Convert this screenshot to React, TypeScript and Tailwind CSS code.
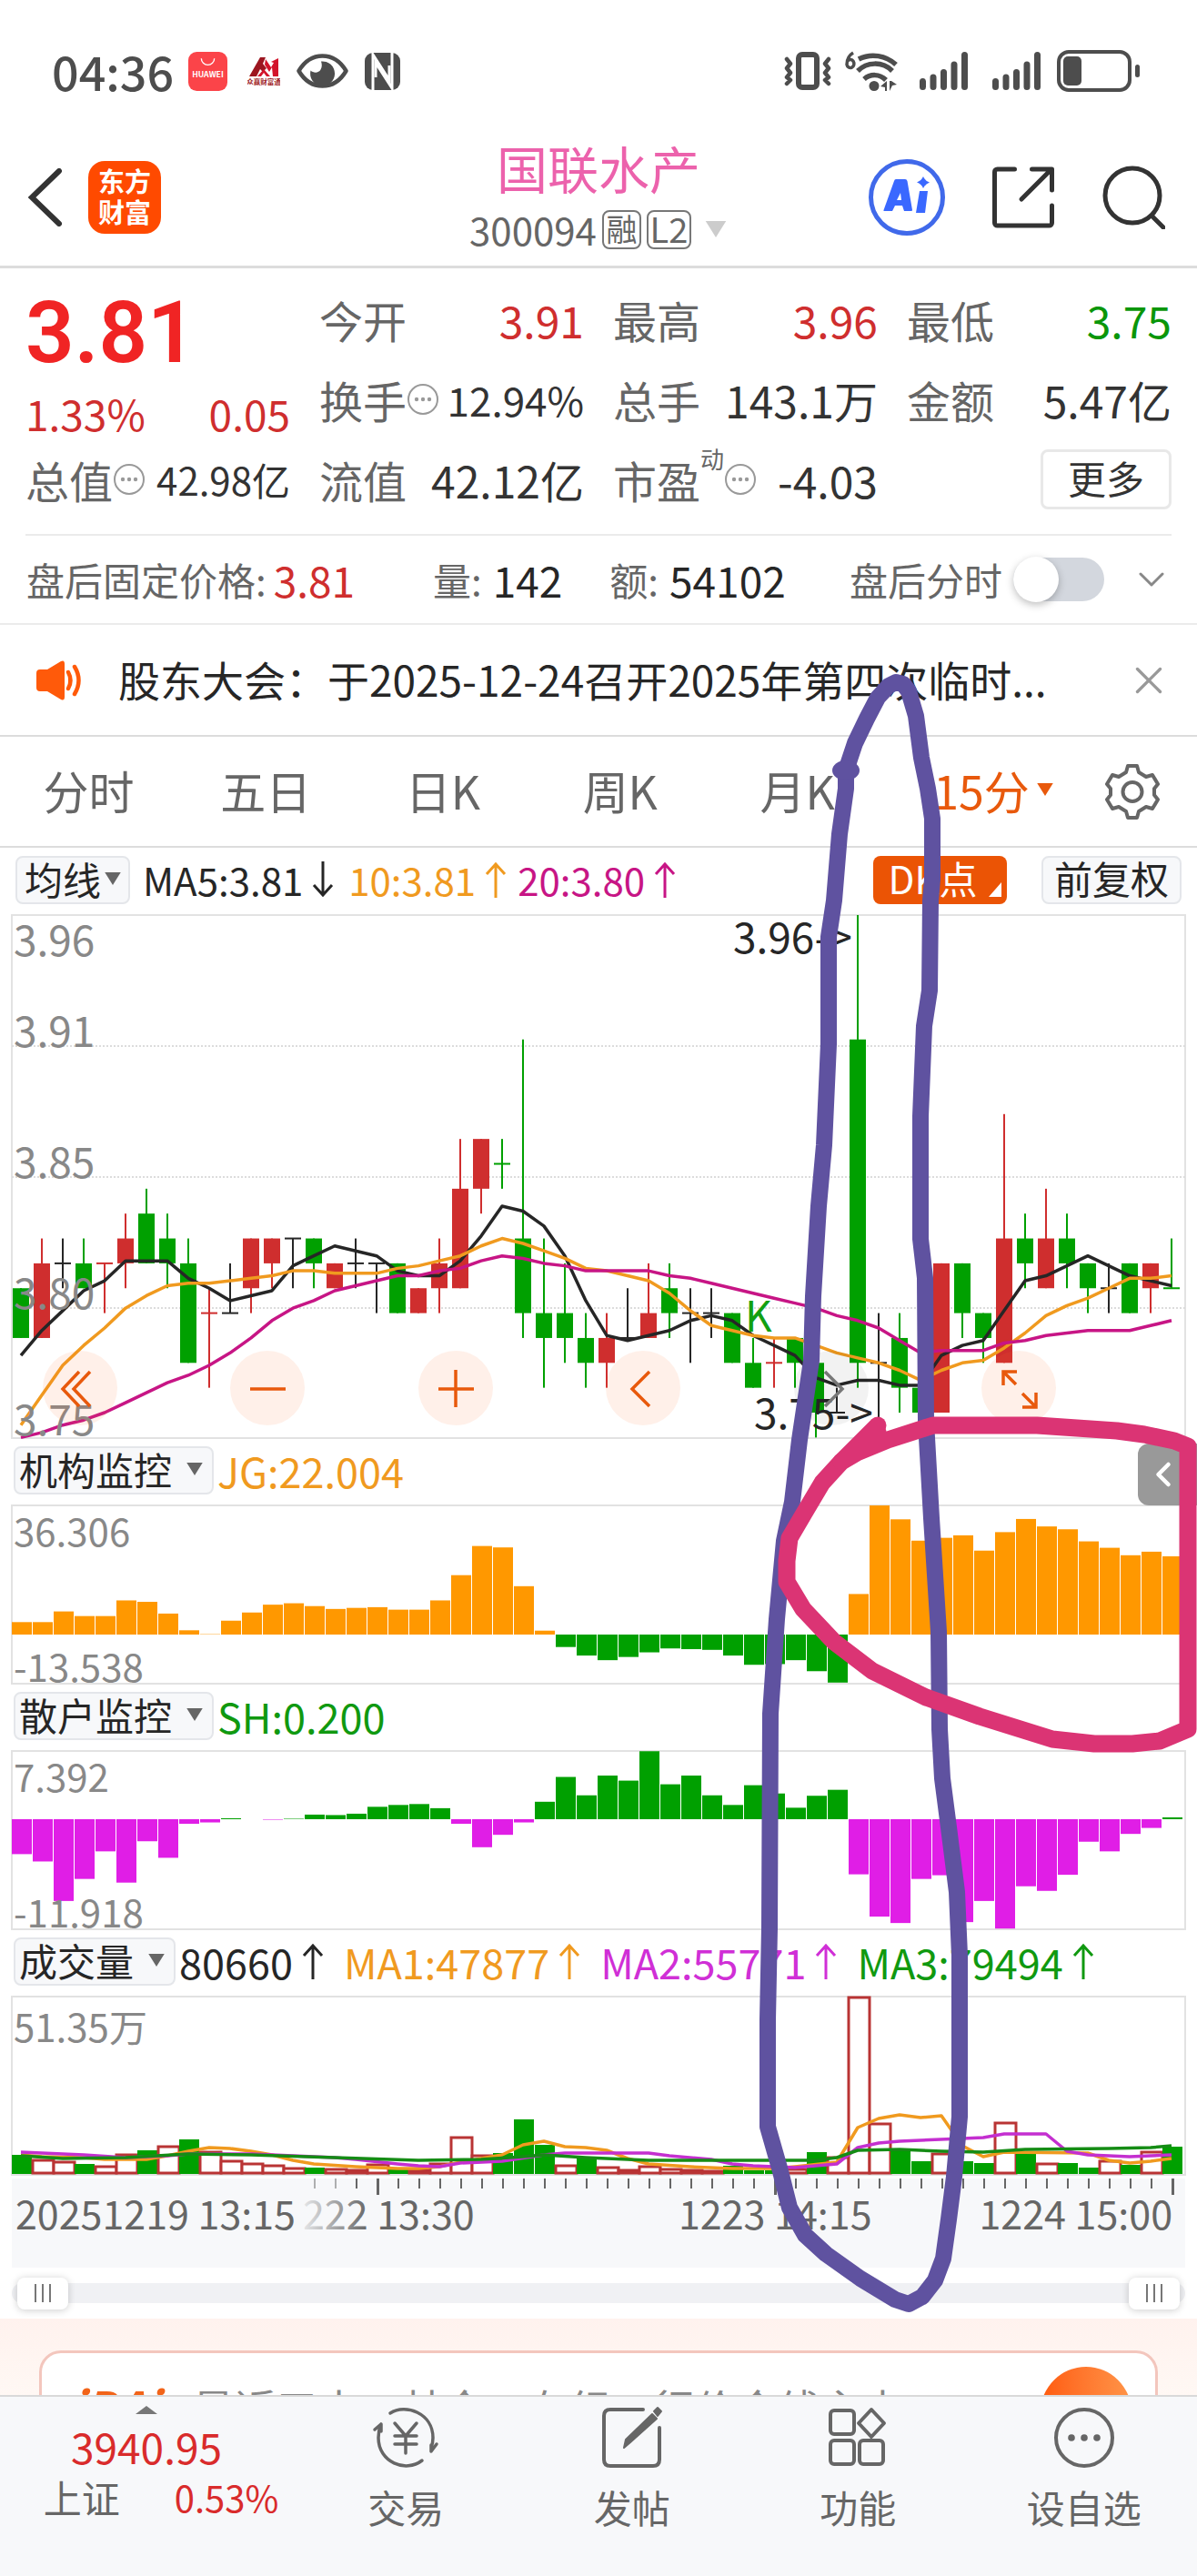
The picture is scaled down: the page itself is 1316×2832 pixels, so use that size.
import { useState, type ReactNode } from "react";
import * as Slider from "@radix-ui/react-slider";
import { ChevronDown, ChevronLeft, X } from "lucide-react";

const RED = "#cf2e2e";
const GREEN = "#00a000";
const INK = "#262626";
const ORANGE = "#f09a1f";
const MAGENTA = "#c71585";
const SLOT = 23;

// colour, high, low, body top, body bottom: all counted in cents below 3.96
type Candle = ["r" | "g" | "k", number, number, number, number];

const CANDLES: Candle[] = [
  ["g", 15, 17, 15, 17], ["r", 13, 17, 14, 17], ["k", 13, 15, 14, 14], ["g", 13, 15, 14, 15],
  ["r", 14, 16, 14, 14], ["r", 12, 15, 13, 14], ["g", 11, 14, 12, 14], ["g", 12, 15, 13, 14],
  ["g", 13, 18, 14, 18], ["r", 15, 19, 16, 16], ["k", 14, 16, 16, 16], ["r", 13, 16, 13, 15],
  ["r", 13, 15, 13, 14], ["k", 13, 15, 13, 13], ["g", 13, 15, 13, 14], ["r", 14, 15, 14, 15],
  ["k", 13, 15, 14, 14], ["k", 14, 16, 14, 14], ["g", 14, 16, 14, 16], ["r", 15, 16, 15, 16],
  ["r", 13, 16, 14, 15], ["r", 9, 15, 11, 15], ["r", 9, 12, 9, 11], ["g", 9, 11, 10, 10],
  ["g", 5, 17, 13, 16], ["g", 13, 19, 16, 17], ["g", 14, 18, 16, 17], ["g", 16, 19, 17, 18],
  ["r", 16, 19, 17, 18], ["k", 15, 17, 17, 17], ["r", 14, 17, 16, 17], ["g", 14, 17, 15, 16],
  ["k", 15, 18, 16, 16], ["k", 15, 17, 16, 16], ["g", 16, 18, 16, 18], ["g", 17, 19, 18, 19],
  ["r", 17, 19, 18, 18], ["g", 17, 19, 17, 18], ["g", 18, 21, 18, 20], ["k", 19, 20, 20, 20],
  ["g", 0, 19, 5, 18], ["k", 16, 21, 18, 18], ["g", 16, 20, 17, 19], ["g", 19, 20, 19, 20],
  ["r", 14, 20, 14, 20], ["g", 14, 17, 14, 16], ["g", 16, 18, 16, 17], ["r", 8, 18, 13, 18],
  ["g", 12, 15, 13, 14], ["r", 11, 15, 13, 15], ["g", 12, 15, 13, 14], ["g", 14, 16, 14, 15],
  ["k", 14, 16, 15, 15], ["g", 14, 16, 14, 16], ["r", 14, 16, 14, 15], ["g", 13, 15, 15, 15],
];

const MA5 = [
  17.7, 16.7, 15.9, 15.1, 14.7, 13.9, 13.9, 13.9, 14.6, 15, 15.5, 15.3, 15.1, 14.1, 13.7, 13.3, 13.5, 13.7, 14.3,
  14.5, 14.5, 13.9, 12.9, 11.7, 11.9, 12.5, 13.7, 15.5, 16.9, 17.1, 16.9, 16.7, 16.3, 16.1, 16.3, 16.9, 17.3, 17.7,
  18.6, 18.9, 18.7, 18.7, 18.9, 18.9, 17.7, 17.3, 17.1, 15.9, 14.7, 14.5, 14.1, 13.7, 14.1, 14.5, 14.7, 14.9,
];
const MA10 = [
  20.5, 19.3, 18.1, 17.3, 16.6, 15.8, 15.3, 14.9, 14.8, 14.8, 14.7, 14.6, 14.5, 14.3, 14.3, 14.4, 14.4, 14.4, 14.2,
  14.1, 13.9, 13.7, 13.3, 13, 13.2, 13.5, 13.8, 14.2, 14.3, 14.5, 14.7, 15.2, 15.9, 16.5, 16.7, 16.9, 17, 17, 17.3,
  17.6, 17.8, 18, 18.3, 18.7, 18.3, 18, 17.9, 17.4, 16.8, 16.1, 15.7, 15.4, 15, 14.6, 14.6, 14.5,
];
const MA20 = [
  21, 20.8, 20.5, 20.3, 20, 19.6, 19.2, 18.8, 18.5, 18.1, 17.6, 17, 16.3, 15.8, 15.5, 15.1, 14.9, 14.7, 14.5, 14.5,
  14.3, 14.2, 13.9, 13.7, 13.8, 14, 14.1, 14.3, 14.3, 14.3, 14.3, 14.5, 14.6, 14.8, 15, 15.2, 15.4, 15.6, 15.8, 16.1,
  16.3, 16.6, 17.1, 17.6, 17.5, 17.5, 17.5, 17.2, 17.1, 16.9, 16.8, 16.7, 16.7, 16.7, 16.5, 16.3,
];

const JG = [
  3.5, 3.5, 6.5, 5.2, 5.2, 9.6, 9.2, 5.9, 1.2, 0.1, 3.9, 6.2, 8.4, 8.8, 8, 7.2, 7.5, 7.7, 7, 7, 9.6, 16.7, 24.9, 24.5,
  13.6, 1.1, -3.5, -5.9, -7.2, -6.3, -5, -3.9, -4.1, -4.3, -5.9, -8.5, -8.3, -7.2, -10.3, -13.5, 11.4, 36.3, 32.4,
  26.4, 27.2, 27.9, 23.6, 28.8, 32.5, 30.4, 29.6, 26.2, 24.4, 22.3, 23.3, 22,
];
const SH = [
  -3.8, -4.6, -8.9, -6.5, -3.5, -6.9, -2.4, -4.2, -0.5, -0.35, 0.1, 0, -0.05, 0.05, 0.5, 0.45, 0.6, 1.35, 1.55, 1.65,
  1.2, -0.5, -3.05, -1.7, -0.35, 1.9, 4.6, 2.6, 4.75, 4.2, 7.4, 3.8, 4.75, 2.6, 1.55, 3.7, 2.8, 1.25, 2.55, 3.2, -6,
  -10.6, -11.3, -6.5, -6.1, -11.2, -8.9, -11.9, -7.3, -7.8, -6.05, -2.45, -3.5, -1.6, -0.95, 0.2,
];

// positive = falling bar (solid green), negative = rising bar (red outline)
const VOLUME = [
  21, -15, -13, 11, -8, -21, 26, -30, 38, -24, -14, -11, -9, -6, 7, -5, -4, -10, 5, -4, -11, -40, -20, 23, 60, 32, -9,
  18, -7, -4, -8, -5, -4, -3, 9, 4, 4, -5, 24, -18, -194, -55, 27, 14, -22, 14, 12, -56, 23, -11, 12, 7, -14, 10, -24,
  30,
];
const VOL_MA1: [number, number][] = [
  [0, 20], [1, 18], [3, 17], [4, 15], [6, 15], [7, 19], [8, 24], [9, 28], [10, 27], [11, 24], [12, 20], [13, 14],
  [14, 10], [16, 7], [18, 5], [19, 5], [20, 7], [21, 12], [22, 16], [23, 20], [24, 31], [25, 35], [26, 29], [27, 28],
  [28, 25], [29, 16], [30, 10], [32, 7], [34, 5], [36, 5], [37, 7], [39, 12], [40, 50], [41, 60], [42, 64], [43, 61],
  [44, 63], [45, 30], [46, 18], [47, 23], [51, 22], [52, 14], [53, 11], [54, 13], [55, 16],
];
const VOL_MA2: [number, number][] = [
  [0, 23], [3, 20], [5, 17], [7, 19], [8, 21], [11, 21], [13, 19], [15, 17], [16, 15], [18, 10], [19, 8], [20, 7],
  [21, 11], [23, 13], [25, 20], [26, 22], [30, 22], [31, 19], [33, 15], [34, 10], [35, 8], [37, 6], [39, 10], [40, 28],
  [41, 33], [42, 35], [45, 38], [46, 39], [47, 43], [49, 43], [50, 24], [51, 20], [53, 18], [54, 19], [55, 20],
];
const VOL_MA3: [number, number][] = [
  [0, 19], [2, 16], [5, 17], [8, 21], [11, 20], [15, 17], [19, 14], [22, 15], [24, 18], [25, 20], [27, 17], [28, 16],
  [30, 14], [38, 14], [39, 17], [40, 25], [42, 26], [44, 24], [46, 23], [48, 26], [52, 27], [54, 28], [55, 30],
];

const cx = (i: number) => i * SLOT + 10;
const priceY = (k: number) => k * 27.35;

function linePoints(values: number[]) {
  return values.map((v, i) => `${cx(i)},${priceY(v)}`).join(" ");
}

function volumePoints(values: [number, number][]) {
  return values.map(([i, v]) => `${cx(i)},${194 - v}`).join(" ");
}

function Frame({ height, children, label }: { height: number; children: ReactNode; label: string }) {
  return (
    <svg viewBox={`0 0 1290 ${height}`} className="block h-auto w-full overflow-visible" role="img" aria-label={label}>
      {children}
    </svg>
  );
}

function PriceChart() {
  return (
    <Frame height={575} label="15分 K线">
      <rect x="0" y="0" width="1290" height="575" fill="none" stroke="#e2e2e2" strokeWidth="2" />
      {[144, 288, 432].map((y) => (
        <line key={y} x1="0" x2="1290" y1={y} y2={y} stroke="#dcdcdc" strokeWidth="2" strokeDasharray="2 2" />
      ))}
      {CANDLES.map(([c, hi, lo, top, bottom], i) => {
        const fill = c === "r" ? RED : c === "g" ? GREEN : INK;
        return (
          <g key={i} fill={fill}>
            <rect x={cx(i) - 1} y={priceY(hi)} width="2" height={priceY(lo) - priceY(hi)} />
            <rect x={cx(i) - 9} y={priceY(top) - (top === bottom ? 1 : 0)} width="18" height={Math.max(2, priceY(bottom) - priceY(top))} />
          </g>
        );
      })}
      <g fill="none" strokeWidth="3.500" strokeLinejoin="round">
        <polyline points={linePoints(MA5)} stroke={INK} />
        <polyline points={linePoints(MA10)} stroke={ORANGE} />
        <polyline points={linePoints(MA20)} stroke={MAGENTA} />
      </g>
      <g fontSize="46" fill="#888888">
        <text x="2" y="45">3.96</text>
        <text x="2" y="145">3.91</text>
        <text x="2" y="289">3.85</text>
        <text x="2" y="433">3.80</text>
        <text x="2" y="572">3.75</text>
      </g>
      <g fontSize="46" fill={INK}>
        <text x="793" y="42">3.96-&gt;</text>
        <text x="816" y="565">3.75-&gt;</text>
      </g>
      <text x="806" y="458" fontSize="46" fill="#12a012">K</text>
    </Frame>
  );
}

function BarPanel({
  values,
  zero,
  unit,
  up,
  down,
  max,
  min,
  label,
}: {
  values: number[];
  zero: number;
  unit: number;
  up: string;
  down: string;
  max: string;
  min: string;
  label: string;
}) {
  return (
    <Frame height={196} label={label}>
      <rect x="0" y="0" width="1290" height="196" fill="none" stroke="#e2e2e2" strokeWidth="2" />
      {values.map((v, i) => (
        <rect
          key={i}
          x={i * SLOT}
          y={v > 0 ? zero - v * unit : zero}
          width="22"
          height={Math.abs(v) * unit}
          fill={v > 0 ? up : down}
        />
      ))}
      <g fontSize="42" fill="#888888">
        <text x="2" y="45">{max}</text>
        <text x="2" y="194">{min}</text>
      </g>
    </Frame>
  );
}

function VolumeChart() {
  return (
    <Frame height={196} label="成交量">
      <rect x="0" y="0" width="1290" height="196" fill="none" stroke="#e2e2e2" strokeWidth="2" />
      {VOLUME.map((v, i) =>
        v > 0 ? (
          <rect key={i} x={i * SLOT} y={195 - v} width="22" height={v} fill={GREEN} />
        ) : (
          <rect key={i} x={i * SLOT} y={195 + v} width="23" height={-v - 1} fill="#fff" stroke="#b93434" strokeWidth="3" />
        ),
      )}
      <g fill="none" strokeWidth="3.500" strokeLinejoin="round">
        <polyline points={volumePoints(VOL_MA1)} stroke={ORANGE} />
        <polyline points={volumePoints(VOL_MA2)} stroke="#c42fd0" />
        <polyline points={volumePoints(VOL_MA3)} stroke="#158c15" />
      </g>
      <text x="2" y="50" fontSize="42" fill="#888888">51.35万</text>
    </Frame>
  );
}

function TimeAxis() {
  return (
    <Frame height={98} label="时间轴">
      <defs>
        <linearGradient id="fade" gradientUnits="userSpaceOnUse" x1="318" x2="392" y1="0" y2="0">
          <stop offset="0" stopColor="#666" stopOpacity="0.1" />
          <stop offset="1" stopColor="#666" />
        </linearGradient>
      </defs>
      <rect width="1290" height="98" fill="#f7f8fa" />
      {Array.from({ length: 42 }, (_, n) => n + 14).map((i) => {
        const major = i === 17 || i === 36 || i === 55;
        return (
          <rect
            key={i}
            x={cx(i)}
            y="0"
            width={major ? 3 : 2}
            height={major ? 18 : 11}
            fill="#666"
            opacity={i < 16 ? 0.5 : 1}
          />
        );
      })}
      <g fontSize="43" fill="#666">
        <text x="4" y="56">20251219 13:15</text>
        <text x="320" y="56" fill="url(#fade)">222 13:30</text>
        <text x="733" y="56">1223 14:15</text>
        <text x="1276" y="56" textAnchor="end">1224 15:00</text>
      </g>
    </Frame>
  );
}

function Arrow({ down = false }: { down?: boolean }) {
  return (
    <svg viewBox="0 0 24 40" className={down ? "h-10 w-6 rotate-180" : "h-10 w-6"} fill="none" stroke="currentColor" strokeWidth="3">
      <path d="M12 40V3M2 14 12 3l10 11" />
    </svg>
  );
}

function Caret({ className }: { className: string }) {
  return (
    <svg viewBox="0 0 20 16" className={className} fill="currentColor">
      <path d="M0 0h20L10 16z" />
    </svg>
  );
}

function Picker({ children }: { children: string }) {
  return (
    <button className="flex h-[53px] items-center gap-4 rounded-lg border-2 border-[#e4e6ea] bg-[#f7f8fa] pr-2.5 pb-0.5 pl-1 text-[42px] leading-none text-[#262626]">
      {children}
      <Caret className="h-3.5 w-[18px] text-[#666]" />
    </button>
  );
}

function InfoDots() {
  return (
    <svg viewBox="0 0 36 36" className="size-9 shrink-0" fill="none" stroke="#999" strokeWidth="2">
      <circle cx="18" cy="18" r="16" />
      <g fill="#999" stroke="none">
        <circle cx="11" cy="18" r="2.200" />
        <circle cx="18" cy="18" r="2.200" />
        <circle cx="25" cy="18" r="2.200" />
      </g>
    </svg>
  );
}

function Stat({
  name,
  value,
  tone = "text-[#333]",
  size = "text-[48px]",
  info = false,
  sup,
}: {
  name: string;
  value: string;
  tone?: string;
  size?: string;
  info?: boolean;
  sup?: string;
}) {
  return (
    <div className="flex h-[88px] items-center whitespace-nowrap">
      <span className="text-[48px] text-[#666]">{name}</span>
      {sup && <span className="self-start pt-2 text-[26px] text-[#666]">{sup}</span>}
      {info && <InfoDots />}
      <span className={`ml-auto ${size} ${tone}`}>{value}</span>
    </div>
  );
}

function Signal() {
  return (
    <svg viewBox="0 0 53 42" className="h-[42px] w-[53px]" stroke="#4d4d4d" strokeWidth="7" strokeLinecap="round">
      <path d="M3.500 32.500v6M15 28v10.500M26.500 22.500v16M38 14v24.500M49.500 3.500v35" />
    </svg>
  );
}

function StatusBar() {
  return (
    <div className="flex h-[150px] items-center pt-1.5 pr-[62px] pl-[57px] text-[#4d4d4d]">
      <span className="text-[52px] font-medium">04:36</span>
      <svg viewBox="0 0 42 42" className="ml-4 size-[43px]">
        <rect width="42" height="42" rx="9" fill="#fb4449" />
        <path d="M14 7a7 7 0 0 0 14 0" fill="none" stroke="#fff" strokeWidth="1.300" />
        <text x="21" y="27.500" textAnchor="middle" fontSize="8.500" fontWeight="bold" fill="#fff">HUAWEI</text>
      </svg>
      <svg viewBox="0 0 36 32" className="ml-[22px] h-8 w-9">
        <path d="M2 22 14 1h6l-3 7 4 5-4 4-3-3-4 8z" fill="#9c1620" />
        <path d="M20 3l6 9 3-5-3-1 8-4v20h-6l-1-10-3 5-5-8z" fill="#d3142b" />
        <path d="M11 22l7-8 7 8h-4l-3-4-3 4z" fill="#d3142b" />
        <text x="18" y="31" textAnchor="middle" fontSize="7.500" fontWeight="bold" fill="#a01c26">众赢财富通</text>
      </svg>
      <svg viewBox="0 0 57 38" className="ml-[18px] h-[38px] w-[57px]">
        <path d="M2.500 19C9 8 18 2.500 28.500 2.500S48 8 54.500 19C48 30 39 35.500 28.500 35.500S9 30 2.500 19z" fill="none" stroke="#4d4d4d" strokeWidth="4.500" strokeLinejoin="round" />
        <path d="M27 8.500a13.500 13.500 0 1 1-11.500 10c3 3 9 3 11-1 1.800-3 1.500-6 .5-9z" fill="#4d4d4d" />
      </svg>
      <svg viewBox="0 0 39 41" className="ml-[18px] h-[41px] w-[39px]">
        <rect width="39" height="41" rx="9" fill="#4d4d4d" />
        <g fill="none" stroke="#fff" strokeWidth="3">
          <path d="M9 41V2l18 28V14" />
          <path d="M30 0v39L12 11v16" />
        </g>
      </svg>

      <svg viewBox="0 0 52 42" className="ml-auto h-[42px] w-[52px]" fill="none" stroke="#4d4d4d">
        <rect x="16" y="3" width="20" height="36" rx="4" strokeWidth="6" />
        <g strokeWidth="4.500" strokeLinecap="round" strokeLinejoin="round">
          <path d="M3 8l4 5-4 5 4 5-4 5 4 3-4 4M49 8l-4 5 4 5-4 5 4 5-4 3 4 4" />
        </g>
      </svg>
      <svg viewBox="0 0 59 45" className="ml-3.5 h-[45px] w-[59px]" fill="none" stroke="#4d4d4d" strokeWidth="5.500">
        <path d="M10 2C5 5 3 9 3 15a4 4.500 0 1 0 1-4" strokeWidth="3.500" />
        <path d="M16 9c14-7 30-4 41 6M15 22c10-10 27-11 38 0M22 31c7-6 17-6 24 1" />
        <circle cx="33" cy="38.500" r="5.500" fill="#4d4d4d" stroke="none" />
        <path d="M40 39l7-6v11h-2v-4zM50 44V33h2l6 4-5 1z" fill="#4d4d4d" stroke="none" />
      </svg>
      <div className="ml-6 flex gap-[27px]">
        <Signal />
        <Signal />
      </div>
      <svg viewBox="0 0 92 46" className="ml-[18px] h-[46px] w-[92px]">
        <rect x="2" y="2" width="78" height="42" rx="11" fill="none" stroke="#4d4d4d" strokeWidth="4" />
        <rect x="7" y="7" width="20" height="32" rx="5" fill="#4d4d4d" />
        <rect x="86" y="16" width="5" height="14" rx="2.500" fill="#4d4d4d" />
      </svg>
    </div>
  );
}

function Header() {
  return (
    <header className="relative flex h-[145px] items-center border-b-3 border-[#dcdcdc] pr-[35px] pb-2 pl-[30px]">
      <button aria-label="返回">
        <svg viewBox="0 0 40 64" className="h-16 w-10" fill="none" stroke="#333" strokeWidth="6" strokeLinecap="round">
          <path d="M35 3 5 32l30 29" />
        </svg>
      </button>
      <div className="ml-[27px] flex size-20 flex-col items-center justify-center rounded-[18px] bg-[#ff4a00] pb-1 text-[29px] leading-[34px] font-bold text-white">
        <span>东方</span>
        <span>财富</span>
      </div>
      <div className="absolute inset-x-0 top-0 flex flex-col items-center">
        <h1 className="text-[56px] leading-[68px] text-[#ec62ac]">国联水产</h1>
        <button className="flex h-[68px] items-center gap-1.5 text-[42px] leading-none text-[#666]">
          300094
          <span className="flex size-[43px] items-center justify-center rounded-lg border-2 border-[#777] pb-0.5 text-[34px]">融</span>
          <span className="flex h-[43px] w-[49px] items-center justify-center rounded-lg border-2 border-[#777] pb-0.5 text-[38px]">L2</span>
          <Caret className="ml-2 h-[18px] w-[26px] text-[#ccc]" />
        </button>
      </div>
      <div className="relative ml-auto flex items-center gap-[52px]">
        <button aria-label="Ai">
          <svg viewBox="0 0 84 84" className="size-[84px]">
            <circle cx="42" cy="42" r="39.500" fill="none" stroke="#4069ea" strokeWidth="5" />
            <path d="M30 22h10q2 0 2.500 2L48 56q0 1-1 1h-8l-2-6h-8l-3 6h-9q-1 0-.5-1L28 24q.5-2 2-2zM35 37l-4 8h5z" fill="#3a68ff" fillRule="evenodd" />
            <path d="M56 35h9l-3 24H52z" fill="#3a68ff" />
            <path d="M60 19q2 5 7 6.500-5 2-7 6.500-2-5-7-6.500 5-2 7-6.500z" fill="#3a68ff" />
          </svg>
        </button>
        <button aria-label="分享">
          <svg viewBox="0 0 68 68" className="size-[68px]" fill="none" stroke="#333" strokeWidth="5" strokeLinecap="round" strokeLinejoin="round">
            <path d="M24.500 3H5.500a3 3 0 0 0-3 3v56a3 3 0 0 0 3 3h57a3 3 0 0 0 3-3V43M43.500 3h22v23M64 4 32 36" />
          </svg>
        </button>
        <button aria-label="搜索">
          <svg viewBox="0 0 70 70" className="size-[70px]" fill="none" stroke="#333" strokeWidth="5" strokeLinecap="round">
            <circle cx="34" cy="33" r="30" />
            <path d="m55 55 13 13" />
          </svg>
        </button>
      </div>
    </header>
  );
}

function Quote() {
  return (
    <section className="mx-[28px] grid grid-cols-4 gap-x-8 border-b-2 border-[#ebebeb] pt-3 pb-4">
      <div className="row-span-2 text-[#cf2e2e]">
        <div className="flex h-[118px] items-center font-[Roboto] text-[94px] leading-none font-semibold text-[#f02424]">3.81</div>
        <div className="flex h-[58px] items-center justify-between text-[46px]">
          <span>1.33%</span>
          <span>0.05</span>
        </div>
      </div>
      <Stat name="今开" value="3.91" tone="text-[#cf2e2e]" />
      <Stat name="最高" value="3.96" tone="text-[#cf2e2e]" />
      <Stat name="最低" value="3.75" tone="text-[#0a960a]" />
      <Stat name="换手" value="12.94%" size="text-[44px]" info />
      <Stat name="总手" value="143.1万" />
      <Stat name="金额" value="5.47亿" />
      <Stat name="总值" value="42.98亿" size="text-[42px]" info />
      <Stat name="流值" value="42.12亿" />
      <Stat name="市盈" value="-4.03" sup="动" info />
      <div className="flex h-[88px] items-center justify-end">
        <button className="h-[66px] w-36 rounded-lg border-3 border-[#e8e8e8] pb-1 text-[42px] leading-none text-[#333]">更多</button>
      </div>
    </section>
  );
}

function AfterHours() {
  const [on, setOn] = useState(false);
  return (
    <section className="flex h-[98px] items-center border-b-2 border-[#ebebeb] pr-[26px] pl-[29px] text-[42px] whitespace-nowrap text-[#666]">
      <span>盘后固定价格:</span>
      <span className="ml-2 text-[46px] text-[#cf2e2e]">3.81</span>
      <span className="ml-[86px]">量:</span>
      <span className="ml-3 text-[46px] text-[#262626]">142</span>
      <span className="ml-[52px]">额:</span>
      <span className="ml-3 text-[46px] text-[#262626]">54102</span>
      <label htmlFor="after" className="ml-auto">盘后分时</label>
      <span className="relative ml-3 flex h-12 w-[100px] items-center rounded-full bg-[#d3d7de]">
        <input id="after" type="checkbox" checked={on} onChange={() => setOn(!on)} className="peer absolute inset-0 z-10 size-full opacity-0" />
        <span className="size-[50px] rounded-full bg-white shadow-[0_3px_8px_rgba(0,0,0,0.25)] peer-checked:ml-auto" />
      </span>
      <ChevronDown className="ml-7 size-12 text-[#888]" strokeWidth={1.5} />
    </section>
  );
}

function Notice() {
  return (
    <section className="flex h-[123px] items-center border-b-2 border-[#dcdcdc] pr-7 pl-10">
      <svg viewBox="0 0 52 44" className="h-11 w-[52px] shrink-0" fill="#ff5a0a">
        <path d="M4 10h8L27 1q4-2 4 3v36q0 5-4 3l-15-9H4q-4 0-4-4V14q0-4 4-4z" />
        <path d="M35 13q5 9 0 18z" />
        <path d="M35 13q5 9 0 18M42 7q9 15 0 30" fill="none" stroke="#ff5a0a" strokeWidth="4.500" strokeLinecap="round" />
      </svg>
      <a href="#notice" className="ml-[38px] flex-1 pb-1 text-[46px] whitespace-nowrap text-[#262626]">
        股东大会：于2025-12-24召开2025年第四次临时...
      </a>
      <button aria-label="关闭">
        <X className="size-[50px] text-[#999]" strokeWidth={1.6} />
      </button>
    </section>
  );
}

const TABS = ["分时", "五日", "日K", "周K", "月K"];

function Tabs() {
  return (
    <nav className="flex h-[122px] items-center border-b-2 border-[#dcdcdc] pr-9 text-[50px] text-[#666]">
      {TABS.map((t) => (
        <button key={t} className="flex-1 pb-1">{t}</button>
      ))}
      <button className="flex w-[236px] items-center justify-center gap-2 pb-1 text-[#e8590c]">
        15分
        <Caret className="h-3.5 w-[18px]" />
      </button>
      <button className="flex w-[70px] justify-center" aria-label="设置">
        <svg viewBox="0 0 60 62" className="h-[62px] w-[60px]" fill="none" stroke="#666" strokeWidth="4" strokeLinejoin="round">
          <path d="M25 3h10l2 7 8 5 7-2 6 10-4 5v7l4 5-6 10-7-2-8 5-2 7H25l-2-7-8-5-7 2-6-10 4-5v-7l-4-5 6-10 7 2 8-5z" />
          <circle cx="30" cy="31.500" r="10.500" />
        </svg>
      </button>
    </nav>
  );
}

function Legend() {
  return (
    <div className="flex h-[74px] items-center pb-1 text-[42px] leading-none whitespace-nowrap">
      <button className="ml-1 flex h-[53px] items-center rounded-lg border-2 border-[#e4e6ea] bg-[#f7f8fa] px-2 pb-0.5 text-[#262626]">
        均线
        <Caret className="ml-1 h-3.5 w-[18px] text-[#666]" />
      </button>
      <span className="ml-3.5 flex items-center gap-2.5 text-[#262626]">MA5:3.81<Arrow down /></span>
      <span className="ml-4 flex items-center gap-2.5 text-[#f09a1f]">10:3.81<Arrow /></span>
      <span className="ml-3 flex items-center gap-2.5 text-[#c71585]">20:3.80<Arrow /></span>
      <button className="relative ml-auto h-[53px] w-[147px] rounded-lg bg-[#eb5405] pr-4 pb-1 text-white">
        DK点
        <svg viewBox="0 0 14 16" className="absolute right-1.5 bottom-2 h-4 w-3.5" fill="#fff">
          <path d="M14 0v16H0z" />
        </svg>
      </button>
      <button className="mr-1 ml-[38px] h-[53px] w-[154px] rounded-lg border-2 border-[#e4e6ea] bg-[#f7f8fa] pb-1 text-[#262626]">前复权</button>
    </div>
  );
}

const CONTROLS = [
  { label: "最左", d: "M40 23 22 42l18 19M52 23 34 42l18 19" },
  { label: "缩小", d: "M22 42h39" },
  { label: "放大", d: "M22 42h39M41 21v41" },
  { label: "左移", d: "M48 23 29 42l19 19" },
  { label: "右移", d: "M34 23l19 19-19 19" },
  { label: "全屏", d: "M39 23H24v15M24 23l14 14M60 46v16H45M60 62 45 47" },
];

function ChartControls() {
  return (
    <div className="absolute inset-x-0 bottom-3.5 flex justify-between pr-[142px] pl-[34px]">
      {CONTROLS.map((c) => (
        <button
          key={c.label}
          aria-label={c.label}
          className={
            c.label === "右移"
              ? "size-[82px] rounded-full bg-black/5 text-[#777]"
              : "size-[82px] rounded-full bg-[#ff6b2b]/10 text-[#e8590c]"
          }
        >
          <svg viewBox="0 0 82 82" className="size-full" fill="none" stroke="currentColor" strokeWidth="3.500">
            <path d={c.d} />
          </svg>
        </button>
      ))}
    </div>
  );
}

function RangeBar() {
  return (
    <Slider.Root defaultValue={[0, 100]} className="relative mx-1.5 flex h-14 items-center">
      <Slider.Track className="-mx-1.5 h-[22px] flex-1 rounded-full bg-[#f0f1f4]" />
      {["起点", "终点"].map((name) => (
        <Slider.Thumb
          key={name}
          aria-label={name}
          className="flex h-[35px] w-14 items-center justify-center gap-1.5 rounded-lg bg-white shadow-[0_1px_8px_rgba(0,0,0,0.2)]"
        >
          <span className="h-5 w-0.5 bg-[#777]" />
          <span className="h-5 w-0.5 bg-[#777]" />
          <span className="h-5 w-0.5 bg-[#777]" />
        </Slider.Thumb>
      ))}
    </Slider.Root>
  );
}

function Banner() {
  return (
    <section className="h-[84px] overflow-hidden bg-linear-to-b from-[#fff2ee] to-[#fff8f4] px-[43px] pt-[35px]">
      <div className="flex h-[136px] items-start rounded-[24px] border-3 border-[#f3c6bd] bg-white pr-[26px] pl-8">
        <span className="pt-8 text-[50px] leading-none font-bold text-[#f26419] italic">iDAi</span>
        <span className="pt-9 pl-9 text-[46px] leading-none whitespace-nowrap text-[#888]">最近五十，其今，在纪，行价金线主中</span>
        <span className="mt-[15px] ml-auto size-[100px] shrink-0 rounded-full bg-linear-to-r from-[#ff5a0a] to-[#ff9447]" />
      </div>
    </section>
  );
}

const ACTIONS: { label: string; icon: ReactNode }[] = [
  {
    label: "交易",
    icon: (
      <>
        <path d="M21 8C38-3 68 8 68 35q0 6-2 11M66 50l6-8M66 50v-7" strokeWidth="3.500" />
        <path d="M56 60C38 74 8 62 8 35q0-8 3-15M11 20l-7 6M11 20v8" strokeWidth="3.500" />
        <path d="M26 19l12 14 12-14M26 33h24M26 42h24M38 33v19" strokeWidth="3.500" />
      </>
    ),
  },
  {
    label: "发帖",
    icon: (
      <>
        <path d="M50 4H14q-7 0-7 7v48q0 7 7 7h47q7 0 7-7V24" />
        <path d="m36 40-7 6 2-9L60 9l5 5zM62 6l4-4 4 4-4 5z" fill="currentColor" strokeWidth="2" />
      </>
    ),
  },
  {
    label: "功能",
    icon: (
      <>
        <rect x="8" y="5" width="26" height="26" rx="4" />
        <rect x="8" y="38" width="26" height="26" rx="4" />
        <rect x="40" y="38" width="26" height="26" rx="4" />
        <path d="M53 4l14 15-14 15-14-15z" />
      </>
    ),
  },
  {
    label: "设自选",
    icon: (
      <>
        <circle cx="38" cy="35" r="31" />
        <g fill="currentColor" stroke="none">
          <circle cx="24" cy="35" r="3.800" />
          <circle cx="38" cy="35" r="3.800" />
          <circle cx="52" cy="35" r="3.800" />
        </g>
      </>
    ),
  },
];

function BottomBar() {
  return (
    <footer className="flex h-[199px] items-start border-t-2 border-[#d9d9d9] bg-[#f7f8fa] text-[42px] leading-none text-[#666]">
      <button className="flex w-[322px] flex-col items-center pt-2.5 text-[#d92b2b]">
        <svg viewBox="0 0 24 9" className="h-[9px] w-6" fill="#777">
          <path d="M12 0l12 9H0z" />
        </svg>
        <span className="pt-3 text-[46px]">3940.95</span>
        <span className="flex items-center gap-[60px] pt-3 pl-8">
          <span className="text-[#666]">上证</span>
          <span className="text-[40px]">0.53%</span>
        </span>
      </button>
      {ACTIONS.map((a) => (
        <button key={a.label} className="flex flex-1 flex-col items-center gap-5 pt-2.5">
          <svg viewBox="0 0 76 70" className="h-[70px] w-[76px]" fill="none" stroke="currentColor" strokeWidth="4" strokeLinecap="round" strokeLinejoin="round">
            {a.icon}
          </svg>
          {a.label}
        </button>
      ))}
    </footer>
  );
}

// Hand-drawn marks over the whole page
function Markup() {
  return (
    <svg viewBox="0 0 1316 2832" className="pointer-events-none absolute inset-x-0 top-0 w-full" fill="none" strokeLinejoin="round" strokeLinecap="round">
      <path
        d="M930 847L940 817 953 790 965 767 977 754 985 750 993 752 999 760 1007 787 1013 833 1020 867 1025 900V967L1023 990 1022 1089 1016 1128 1012 1227V1362L1017 1405 1018 1563 1024 1669 1032 1794 1033 1901 1036 1955 1043 2009 1052 2080 1055 2150V2327L1049 2393 1043 2440 1037 2483 1028 2507 1014 2525 999 2533 984 2528 946 2505 908 2478 885 2457 868 2427 858 2387 844 2338V2220L846 2120 847 1884 854 1780 862 1694 871 1651 879 1583 892 1496 894 1425 900 1326 906 1259 911 1148V1030L917 990 923 917 930 867z"
        stroke="#5f52a0"
        strokeWidth="18"
      />
      <ellipse cx="930" cy="847" rx="15" ry="11" fill="#5f52a0" />
      <path
        d="M965 1575L942 1597 925 1607 904 1630 885 1662 868 1691 865 1716V1739L883 1769 917 1805 959 1837 1018 1866 1077 1887 1157 1912 1203 1917 1245 1917 1275 1914 1306 1901V1590L1291 1584 1258 1577 1228 1573 1140 1567H1026L976 1583 942 1597"
        stroke="#db3474"
        strokeWidth="19"
      />
      <path d="M965 1567L925 1607" stroke="#db3474" strokeWidth="19" />
    </svg>
  );
}

export default function App() {
  return (
    <main className="relative w-full overflow-hidden bg-white font-['Noto_Sans_CJK_SC',sans-serif] leading-none">
      <StatusBar />
      <Header />
      <Quote />
      <AfterHours />
      <Notice />
      <Tabs />

      <div className="mx-[13px]">
        <Legend />
        <div className="relative">
          <PriceChart />
          <ChartControls />
        </div>

        <div className="relative flex h-[74px] items-center gap-1 pb-1 pl-0.5 text-[45px] text-[#f09a1f]">
          <Picker>机构监控</Picker>
          JG:22.004
          <button aria-label="展开" className="absolute top-1.5 -right-[13px] flex h-[68px] w-[65px] items-center rounded-l-xl bg-[#999] pl-1.5 text-white">
            <ChevronLeft className="size-11" strokeWidth={2.5} />
          </button>
        </div>
        <BarPanel label="机构监控" values={JG} zero={142} unit={3.91} up="#ff9800" down={GREEN} max="36.306" min="-13.538" />

        <div className="flex h-[74px] items-center gap-1 pb-1 pl-0.5 text-[45px] text-[#109910]">
          <Picker>散户监控</Picker>
          SH:0.200
        </div>
        <BarPanel label="散户监控" values={SH} zero={75} unit={10.1} up={GREEN} down="#e01ee6" max="7.392" min="-11.918" />

        <div className="flex h-[74px] items-center pb-1 pl-0.5 text-[45px] whitespace-nowrap">
          <Picker>成交量</Picker>
          <span className="ml-1 flex items-center gap-2.5 text-[#262626]">80660<Arrow /></span>
          <span className="ml-[22px] flex items-center gap-2.5 text-[#f09a1f]">MA1:47877<Arrow /></span>
          <span className="ml-[22px] flex items-center gap-2.5 text-[#d02fd6]">MA2:55771<Arrow /></span>
          <span className="ml-[22px] flex items-center gap-2.5 text-[#109910]">MA3:79494<Arrow /></span>
        </div>
        <VolumeChart />
        <div className="mt-1">
          <TimeAxis />
        </div>
        <RangeBar />
      </div>

      <Banner />
      <BottomBar />
      <Markup />
    </main>
  );
}
